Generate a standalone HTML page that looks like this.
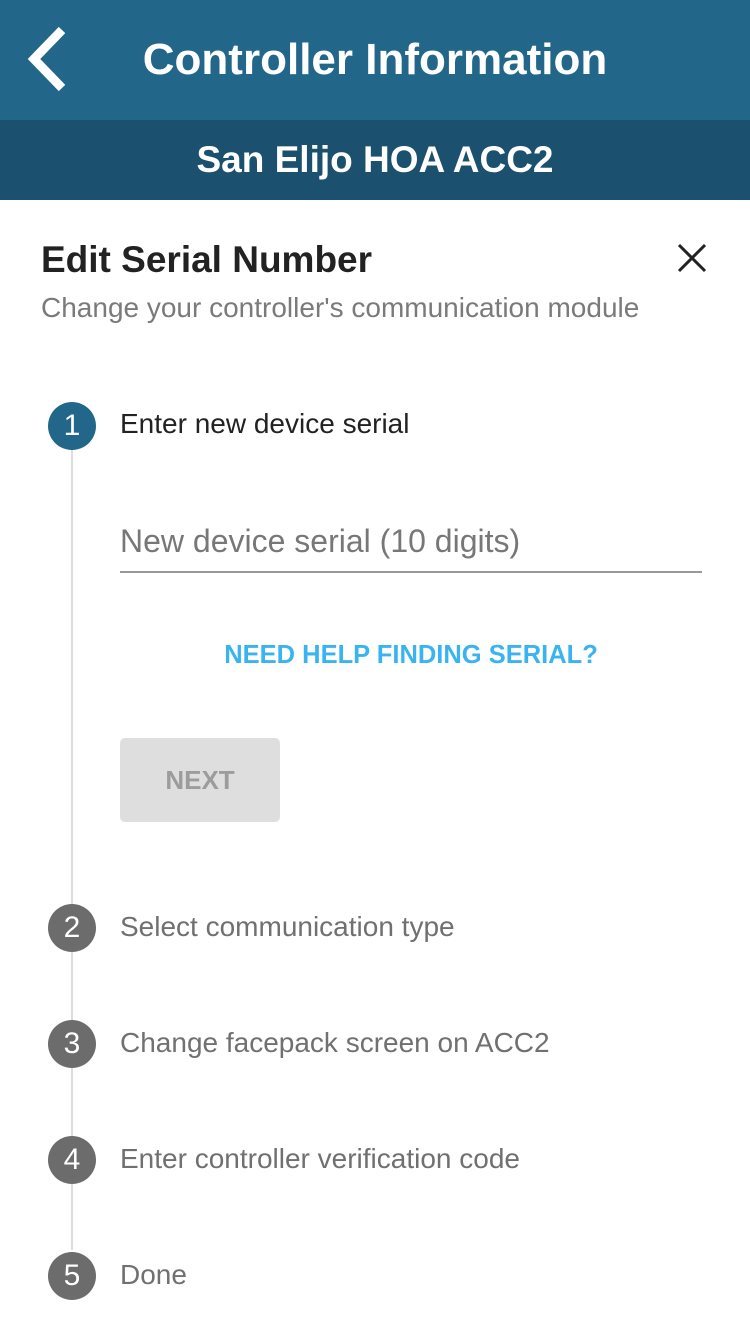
<!DOCTYPE html>
<html><head><meta charset="utf-8"><style>
*{margin:0;padding:0;box-sizing:border-box}
body{width:750px;height:1334px;background:#fff;font-family:"Liberation Sans",Arial,sans-serif;position:relative;overflow:hidden}
.a{position:absolute}
.hdr{left:0;top:0;width:750px;height:120px;background:#226789}
.sub{left:0;top:120px;width:750px;height:80px;background:#1b506e}
.t1{left:0;width:750px;top:35px;text-align:center;color:#fff;font-size:44px;font-weight:bold}
.t2{left:0;width:750px;top:139px;text-align:center;color:#fff;font-size:37px;font-weight:bold}
.circ{width:48px;height:48px;border-radius:50%;color:#fff;font-size:30px;text-align:center;line-height:48px;left:48px;background:#6c6c6c}
.lbl{left:120px;font-size:28px;color:#707070}
</style></head><body>
<div class="a hdr"></div>
<div class="a sub"></div>
<svg class="a" style="left:24px;top:26px" width="46" height="66" viewBox="0 0 46 66"><path d="M38 4 L10 33 L38 62" fill="none" stroke="#fff" stroke-width="9"/></svg>
<div class="a t1">Controller Information</div>
<div class="a t2">San Elijo HOA ACC2</div>
<div class="a" style="left:41px;top:239px;font-size:37px;font-weight:bold;color:#222">Edit Serial Number</div>
<svg class="a" style="left:676px;top:242px" width="32" height="32"><path d="M3 3L29 29M29 3L3 29" stroke="#222" stroke-width="3"/></svg>
<div class="a" style="left:41px;top:292px;font-size:28px;color:#7a7a7a">Change your controller's communication module</div>
<div class="a" style="left:71px;top:450px;width:2px;height:800px;background:#ddd"></div>
<div class="a circ" style="top:402px;background:#226789">1</div>
<div class="a lbl" style="top:408px;color:#222">Enter new device serial</div>
<div class="a" style="left:120px;top:523px;font-size:32px;color:#777">New device serial (10 digits)</div>
<div class="a" style="left:120px;top:571px;width:582px;height:2px;background:#999"></div>
<div class="a" style="left:120px;width:582px;top:641px;text-align:center;font-size:25.5px;color:#3ab4f0;font-weight:bold">NEED HELP FINDING SERIAL?</div>
<div class="a" style="left:120px;top:738px;width:160px;height:84px;background:#dedede;border-radius:5px;text-align:center;line-height:84px;color:#9c9c9c;font-size:26px;font-weight:bold">NEXT</div>
<div class="a circ" style="top:904px">2</div>
<div class="a lbl" style="top:911px">Select communication type</div>
<div class="a circ" style="top:1020px">3</div>
<div class="a lbl" style="top:1027px">Change facepack screen on ACC2</div>
<div class="a circ" style="top:1136px">4</div>
<div class="a lbl" style="top:1143px">Enter controller verification code</div>
<div class="a circ" style="top:1252px">5</div>
<div class="a lbl" style="top:1259px">Done</div>
</body></html>
